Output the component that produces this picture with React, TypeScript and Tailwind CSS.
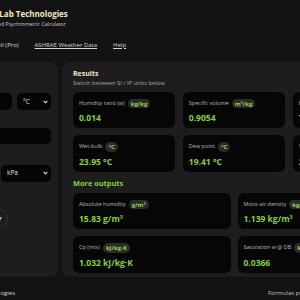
import React from "react";

const FONT = "font-['Open_Sans','Noto_Sans',sans-serif]";

function Pill({ children }: { children: React.ReactNode }) {
  return (
    <span className="inline-flex items-center justify-center h-[9.5px] px-[3px] rounded-full bg-[#2c2c2c] text-[6px] font-bold text-[#95d14a] leading-none whitespace-nowrap">
      {children}
    </span>
  );
}

function Card({ label, unit, value }: { label: string; unit: React.ReactNode; value: React.ReactNode }) {
  return (
    <div className="rounded-[6px] bg-[#060606] h-[36.5px] px-[6px] pt-[7px] flex flex-col overflow-hidden">
      <div className="flex items-center gap-[3px] h-[9.5px]">
        <span className="text-[5.5px] text-[#b8b8b8] whitespace-nowrap leading-none">{label}</span>
        <Pill>{unit}</Pill>
      </div>
      <div className="mt-[4px] text-[8.5px] font-bold text-[#86d13c] leading-[11px] whitespace-nowrap">{value}</div>
    </div>
  );
}

function Chevron() {
  return (
    <svg width="5" height="4" viewBox="0 0 5 4" className="shrink-0">
      <path d="M0.7 1 L2.5 2.8 L4.3 1" fill="none" stroke="#e9dfb5" strokeWidth="1.1" />
    </svg>
  );
}

export default function App() {
  return (
    <div className={`w-[300px] h-[300px] overflow-hidden bg-[#131313] ${FONT}`}>
      <div className="w-[700px] -ml-[200px]">
        {/* Header */}
        <header className="pt-[8.5px] pl-[180.5px]">
          <div className="text-[8px] font-bold leading-[10px] text-[#f3e8c3] whitespace-nowrap">AeroLab Technologies</div>
          <div className="mt-[2.6px] text-[5.2px] leading-[7px] text-[#c9c9c9] whitespace-nowrap">Advanced Psychrometric Calculator</div>
        </header>
        <nav className="mt-[12.8px] pl-[194px] flex gap-[16px] text-[6px] leading-[8px] text-[#d6d6d6] whitespace-nowrap">
          <span>Full (Pro)</span>
          <span className="underline underline-offset-[1px]">ASHRAE Weather Data</span>
          <span className="underline underline-offset-[1px]">Help</span>
        </nav>

        {/* Main */}
        <main className="mt-[13px] pl-[8px] flex gap-[4.5px] items-start">
          {/* Inputs panel */}
          <section className="w-[249.5px] h-[215px] rounded-[8px] bg-[#1d1d1d] pl-[7px] pr-[6.5px] pt-[7px] flex flex-col">
            <div className="h-[9px] text-[7px] font-bold leading-[9px] text-[#f3e8c3]">Inputs</div>
            <div className="mt-[6.5px] h-[8px] text-[5.5px] leading-[8px] text-[#a8a8a8]">Dry-bulb temperature</div>
            <div className="mt-[1px] flex gap-[5.5px] h-[17px]">
              <div className="flex-1 rounded-[5px] bg-[#050505]" />
              <div className="w-[34px] rounded-[5px] bg-[#050505] flex items-center justify-between pl-[6px] pr-[3px]">
                <span className="text-[6.5px] text-[#dfe6a8] leading-none">°C</span>
                <Chevron />
              </div>
            </div>
            <div className="mt-[5px] h-[8px] text-[5.5px] leading-[8px] text-[#a8a8a8]">Relative humidity (%)</div>
            <div className="mt-[4.8px] h-[16px] rounded-[5px] bg-[#050505]" />
            <div className="mt-[7px] h-[8px] text-[5.5px] leading-[8px] text-[#a8a8a8]">Barometric pressure</div>
            <div className="mt-[5.7px] flex gap-[5px] h-[17px]">
              <div className="flex-1 rounded-[5px] bg-[#050505]" />
              <div className="w-[50px] rounded-[5px] bg-[#050505] flex items-center justify-between pl-[6px] pr-[3px]">
                <span className="text-[6.5px] text-[#f3e8c3] leading-none">kPa</span>
                <Chevron />
              </div>
            </div>
            <div className="mt-[27px] flex gap-[6px] h-[19px]">
              <button className="w-[140px] h-[19px] rounded-full bg-[#86d13c] text-[6px] font-bold text-[#111]">Calculate</button>
              <button className="w-[47px] h-[19px] rounded-full border border-[#353535] bg-[#1d1d1d] text-[6px] font-bold text-[#f3e8c3] flex items-center justify-end pr-[5.5px] leading-none">
                Copy
              </button>
            </div>
          </section>

          {/* Results panel */}
          <section className="w-[344px] h-[215px] rounded-[8px] bg-[#1d1d1d] px-[11px] pt-[7px] flex flex-col">
            <div className="text-[7px] font-bold leading-[9px] text-[#f3e8c3]">Results</div>
            <div className="mt-[1.5px] text-[5.8px] leading-[8px] text-[#a8a8a8] whitespace-nowrap">Switch between SI / IP units below</div>
            <div className="mt-[4.5px] grid grid-cols-3 gap-x-[7.5px] gap-y-[7px]">
              <Card label="Humidity ratio (w)" unit="kg/kg" value="0.014" />
              <Card label="Specific volume" unit="m³/kg" value="0.9054" />
              <Card label="Enthalpy" unit="kJ/kg" value="71.86 kJ/kg" />
              <Card label="Wet-bulb" unit="°C" value="23.95 °C" />
              <Card label="Dew point" unit="°C" value="19.41 °C" />
              <Card label="Vapor pressure" unit="kPa" value="2.254 kPa" />
            </div>
            <div className="mt-[6px] mb-[5px] h-[10px] text-[7.4px] font-bold leading-[10px] text-[#86d13c]">More outputs</div>
            <div className="grid grid-cols-2 gap-x-[7px] gap-y-[7px]">
              <Card label="Absolute humidity" unit="g/m³" value="15.83 g/m³" />
              <Card label="Moist-air density" unit="kg/m³" value="1.139 kg/m³" />
              <Card label="Cp (mix)" unit="kJ/kg·K" value="1.032 kJ/kg·K" />
              <Card label="Saturation w @ DB" unit="kg/kg" value="0.0366" />
            </div>
          </section>
        </main>

        {/* Footer */}
        <footer className="mt-[12px] flex text-[6px] leading-[8px] whitespace-nowrap">
          <div className="w-[215px] shrink-0 flex justify-end">
            <span className="text-[#d2d6de]">© 2025 AeroLab Technologies</span>
          </div>
          <span className="ml-[253px] text-[#c4c4c4]">Formulas per ASHRAE Handbook</span>
        </footer>
      </div>
    </div>
  );
}
